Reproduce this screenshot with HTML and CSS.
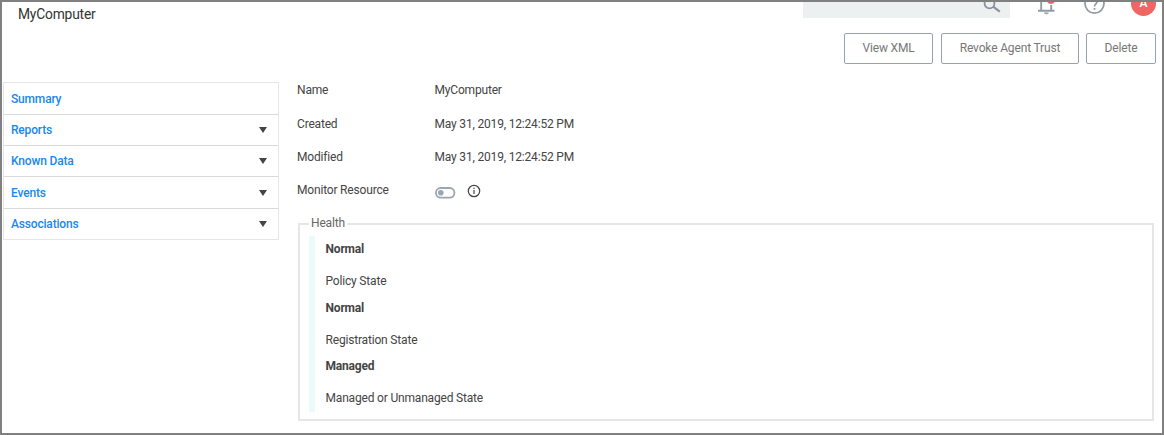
FILE: index.html
```html
<!DOCTYPE html>
<html lang="en">
<head>
<meta charset="utf-8">
<title>MyComputer</title>
<link rel="stylesheet" href="styles.css">
</head>
<body>
<div class="frame">
  <header class="topbar">
    <h1 class="title">MyComputer</h1>
    <div class="tools">
      <div class="search">
        <svg class="icon-search" width="20" height="16" viewBox="0 0 20 16" fill="none" stroke="#87939e"><circle cx="7.5" cy="1.4" r="4.9" stroke-width="1.8"/><path d="M11.2 4.6L17.8 9.6" stroke-width="2.2"/></svg>
      </div>
      <svg class="icon-bell" width="18" height="16" viewBox="0 0 18 16"><path d="M4.2 0V8.2M14.2 3V8.2M1 8.7H17.5" fill="none" stroke="#919ca7" stroke-width="1.9"/><path d="M7 10.4H11.8A2.4 1.8 0 0 1 7 10.4Z" fill="#919ca7"/><circle cx="14" cy="-2" r="4" fill="#ef6663"/></svg>
      <svg class="icon-help" width="22" height="16" viewBox="0 0 22 16" fill="none" stroke="#919ca7"><circle cx="11.5" cy="1.6" r="9.5" stroke-width="1.8"/><path d="M14.5 -1.5C14.7 1.5 11.5 1.5 11.5 4.6" stroke-width="1.7"/><path d="M11.5 6V7.8" stroke-width="1.8"/></svg>
      <div class="avatar-slot"><div class="avatar">A</div></div>
    </div>
  </header>
  <div class="actions">
    <button class="btn btn-view">View XML</button>
    <button class="btn btn-revoke">Revoke Agent Trust</button>
    <button class="btn btn-delete">Delete</button>
  </div>
  <div class="body">
    <nav class="menu">
      <a class="item">Summary</a>
      <a class="item">Reports<span class="caret"></span></a>
      <a class="item">Known Data<span class="caret"></span></a>
      <a class="item">Events<span class="caret"></span></a>
      <a class="item last">Associations<span class="caret"></span></a>
    </nav>
    <main class="main">
      <dl class="props">
        <dt>Name</dt><dd>MyComputer</dd>
        <dt>Created</dt><dd>May 31, 2019, 12:24:52 PM</dd>
        <dt>Modified</dt><dd>May 31, 2019, 12:24:52 PM</dd>
        <dt>Monitor Resource</dt>
        <dd class="monitor">
          <svg class="toggle" width="22" height="12" viewBox="0 0 22 12"><rect x="1" y="1" width="18.4" height="9.6" rx="4.6" fill="#fff" stroke="#9ba6b0" stroke-width="1.8"/><circle cx="5.8" cy="5.8" r="2.8" fill="#9ba6b0"/></svg>
          <svg class="info" width="14" height="14" viewBox="0 0 14 14"><circle cx="7" cy="7" r="5.7" fill="none" stroke="#444" stroke-width="1.2"/><path d="M7 6V10M7 3.8V5" stroke="#444" stroke-width="1.2"/></svg>
        </dd>
      </dl>
      <fieldset class="health">
        <legend>Health</legend>
        <div class="states">
          <strong>Normal</strong><span>Policy State</span>
          <strong>Normal</strong><span>Registration State</span>
          <strong>Managed</strong><span>Managed or Unmanaged State</span>
        </div>
      </fieldset>
    </main>
  </div>
</div>
</body>
</html>
```
FILE: styles.css
```css
* { box-sizing: border-box; }
body { margin: 0; background: #fff; color: #444; font: 12px/16px Roboto, sans-serif; letter-spacing: -0.18px; }
.frame { width: 1164px; height: 435px; border: 2px solid #808080; overflow: hidden; }
.topbar { display: flex; justify-content: space-between; height: 31px; }
.title { margin: 0; padding: 4px 0 0 16px; font-size: 13.8px; line-height: 16px; font-weight: 400; color: #333; }
.tools { display: flex; height: 16px; padding-right: 6px; }
.search { display: flex; justify-content: flex-end; width: 207px; padding-right: 8px; background: #ecf0f1; }
.icon-bell { margin-left: 27px; }
.icon-help { margin-left: 28px; }
.avatar-slot { width: 25px; height: 16px; margin-left: 26px; overflow: hidden; display: flex; align-items: flex-end; }
.avatar { flex: none; width: 25px; height: 25px; margin-bottom: 2px; border-radius: 50%; background: #ef6663; color: #fff; font-size: 12px; line-height: 25px; font-weight: 500; text-align: center; }
.actions { display: flex; justify-content: flex-end; padding-right: 6px; height: 31px; }
.btn { height: 31px; padding: 0 0 1px; border: 1px solid #97a3af; border-radius: 2px; background: #fff; color: #777; font: 12px/16px Roboto, sans-serif; letter-spacing: -0.15px; }
.btn-view { width: 89px; margin-right: 8px; }
.btn-revoke { width: 138px; margin-right: 7px; }
.btn-delete { width: 70px; }
.body { display: flex; padding: 18px 8px 0 1px; }
.menu { display: grid; grid-template-rows: 32px 31px 31px 32px 30px; width: 276px; height: 158px; border: 1px solid #e6e6e6; }
.item { display: flex; align-items: center; justify-content: space-between; padding: 0 11px 0 7px; border-bottom: 1px solid #d9d9d9; color: #1a87ee; font-weight: 500; }
.last { border-bottom: 0; }
.caret { border: 4px solid transparent; border-top: 6px solid #444; border-bottom: 0; }
.main { flex: 1; padding-left: 18px; }
.props { display: grid; grid-template-columns: 137.5px 1fr; grid-template-rows: 34px 33px 33px 34px; margin: 0; }
.props dd { margin: 0; }
.monitor { display: flex; align-items: flex-start; }
.toggle { margin-top: 5px; }
.info { margin: 2px 0 0 10px; }
.health { height: 206px; margin: -1px 0 0 1px; padding: 4px 0 0 9px; border: 2px solid #e6e6e6; }
.health legend { height: 18px; margin-left: 0; padding: 0 2px; color: #666; }
.states { display: grid; grid-template-rows: 32px 27px 32px 26px 32px 27px; height: 176px; margin-top: -1px; padding-left: 10.5px; border-left: 6px solid #eafbfa; }
.states > * { padding-top: 5px; }
```
